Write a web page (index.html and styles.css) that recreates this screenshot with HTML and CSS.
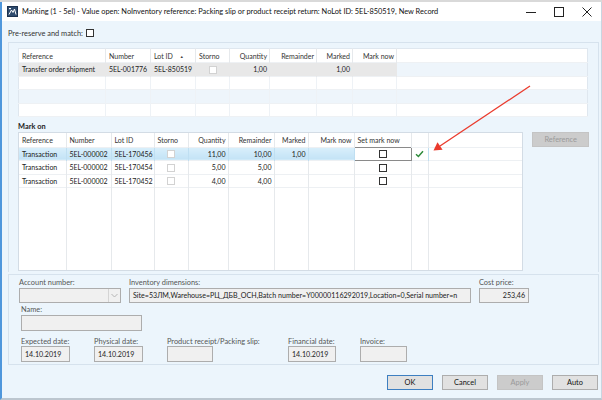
FILE: index.html
```html
<!DOCTYPE html>
<html>
<head>
<meta charset="utf-8">
<link rel="stylesheet" href="styles.css">
</head>
<body>
<div class="win">
  <div class="strip"></div>
  <div class="frame">
    <div class="titlebar">
      <svg class="appicon" width="11" height="11" viewBox="0 0 11 11">
        <rect x="0.5" y="0.5" width="10" height="10" fill="#2f4b6e" stroke="#1d3350"/>
        <path d="M2 8.5 L4.5 4 L6 6.5 L7.5 3 L9 8.5" fill="none" stroke="#ffffff" stroke-width="1"/>
        <rect x="2" y="2" width="2" height="1.2" fill="#ffffff"/>
      </svg>
      <span class="title">Marking (1 - 5el) - Value open: NoInventory reference: Packing slip or product receipt return: NoLot ID: 5EL-850519, New Record</span>
      <div class="controls">
        <span class="ctl"><svg width="10" height="10" viewBox="0 0 10 10"><path d="M0 5.5 H10" stroke="#222" stroke-width="1"/></svg></span>
        <span class="ctl"><svg width="10" height="10" viewBox="0 0 10 10"><rect x="0.5" y="0.5" width="9" height="9" fill="none" stroke="#222" stroke-width="1"/></svg></span>
        <span class="ctl"><svg width="10" height="10" viewBox="0 0 10 10"><path d="M0.5 0.5 L9.5 9.5 M9.5 0.5 L0.5 9.5" stroke="#222" stroke-width="1"/></svg></span>
      </div>
    </div>

    <div class="body">
      <div class="prerow">Pre-reserve and match: <span class="cb"></span></div>

      <div class="panel main">
        <table class="grid g1">
          <colgroup>
            <col style="width:87px"><col style="width:45px"><col style="width:45px"><col style="width:34px"><col style="width:40px"><col style="width:47px"><col style="width:36px"><col style="width:44px"><col>
          </colgroup>
          <tr class="hdr">
            <th>Reference</th><th>Number</th><th>Lot ID <span class="sort">&#9650;</span></th><th>Storno</th><th class="r">Quantity</th><th class="r">Remainder</th><th class="r">Marked</th><th class="r">Mark now</th><th class="fill"></th>
          </tr>
          <tr class="sel1">
            <td>Transfer order shipment</td><td>5EL-001776</td><td>5EL-850519</td><td class="c"><span class="cbd"></span></td><td class="r">1,00</td><td class="r"></td><td class="r">1,00</td><td></td><td class="fill"></td>
          </tr>
          <tr class="e"><td></td><td></td><td></td><td></td><td></td><td></td><td></td><td></td><td class="fill"></td></tr>
          <tr class="e alt"><td></td><td></td><td></td><td></td><td></td><td></td><td></td><td></td><td class="fill"></td></tr>
          <tr class="e"><td></td><td></td><td></td><td></td><td></td><td></td><td></td><td></td><td class="fill"></td></tr>
        </table>

        <div class="markon">Mark on</div>

        <div class="lowrow">
          <div class="g2wrap">
            <table class="grid g2">
              <colgroup>
                <col style="width:47px"><col style="width:45px"><col style="width:43px"><col style="width:34px"><col style="width:40px"><col style="width:46px"><col style="width:34px"><col style="width:46px"><col style="width:57px"><col style="width:17px"><col>
              </colgroup>
              <tr class="hdr">
                <th>Reference</th><th>Number</th><th>Lot ID</th><th>Storno</th><th class="r">Quantity</th><th class="r">Remainder</th><th class="r">Marked</th><th class="r">Mark now</th><th>Set mark now</th><th></th><th class="fill"></th>
              </tr>
              <tr class="sel2">
                <td>Transaction</td><td>5EL-000002</td><td>5EL-170456</td><td class="c"><span class="cbd"></span></td><td class="r">11,00</td><td class="r">10,00</td><td class="r">1,00</td><td></td><td class="c edit"><span class="cb"></span></td><td class="c ok"><svg width="9" height="8" viewBox="0 0 9 8"><path d="M1 4.2 L3.4 6.5 L8 1.2" fill="none" stroke="#2e8b3a" stroke-width="1.5"/></svg></td><td class="fill"></td>
              </tr>
              <tr>
                <td>Transaction</td><td>5EL-000002</td><td>5EL-170454</td><td class="c"><span class="cbd"></span></td><td class="r">5,00</td><td class="r">5,00</td><td class="r"></td><td></td><td class="c"><span class="cb"></span></td><td></td><td class="fill"></td>
              </tr>
              <tr>
                <td>Transaction</td><td>5EL-000002</td><td>5EL-170452</td><td class="c"><span class="cbd"></span></td><td class="r">4,00</td><td class="r">4,00</td><td class="r"></td><td></td><td class="c"><span class="cb"></span></td><td></td><td class="fill"></td>
              </tr>
              <tr class="last"><td></td><td></td><td></td><td></td><td></td><td></td><td></td><td></td><td></td><td></td><td class="fill"></td></tr>
            </table>
          </div>
          <div class="btn disabled refbtn">Reference</div>
        </div>
      </div>

      <div class="panel bottom">
        <div class="frow r1">
          <div class="fg acct">
            <div class="lbl">Account number:</div>
            <div class="fld combo"><span class="dd"><svg width="7" height="5" viewBox="0 0 7 5"><path d="M0.5 1 L3.5 4 L6.5 1" fill="none" stroke="#b5b5b5" stroke-width="1"/></svg></span></div>
          </div>
          <div class="fg inv">
            <div class="lbl">Inventory dimensions:</div>
            <div class="fld">Site=53ЛМ,Warehouse=РЦ_ДБВ_ОСН,Batch number=Y00000116292019,Location=0,Serial number=n</div>
          </div>
          <div class="fg cost">
            <div class="lbl">Cost price:</div>
            <div class="fld r">253,46</div>
          </div>
        </div>
        <div class="frow r2">
          <div class="fg name">
            <div class="lbl">Name:</div>
            <div class="fld tall"></div>
          </div>
        </div>
        <div class="frow r3">
          <div class="fg d1"><div class="lbl">Expected date:</div><div class="fld date">14.10.2019</div></div>
          <div class="fg d2"><div class="lbl">Physical date:</div><div class="fld date">14.10.2019</div></div>
          <div class="fg d3"><div class="lbl">Product receipt/Packing slip:</div><div class="fld date"></div></div>
          <div class="fg d4"><div class="lbl">Financial date:</div><div class="fld date">14.10.2019</div></div>
          <div class="fg d5"><div class="lbl">Invoice:</div><div class="fld date"></div></div>
        </div>
      </div>

      <div class="btnrow">
        <div class="btn def">OK</div>
        <div class="btn">Cancel</div>
        <div class="btn disabled">Apply</div>
        <div class="btn">Auto</div>
      </div>
    </div>
  </div>

  <svg class="arrow" width="602" height="400" viewBox="0 0 602 400">
    <path d="M530 86 L440 146" stroke="#ea3a2c" stroke-width="1.3" fill="none"/>
    <path d="M433.5 150.5 L437.5 142.2 L442.6 149.8 Z" fill="#ea3a2c"/>
  </svg>
</div>
</body>
</html>
```

FILE: styles.css
```css
* { box-sizing: border-box; }
html, body { margin: 0; padding: 0; background: #ffffff; }
.win {
  position: relative;
  width: 602px;
  height: 400px;
  overflow: hidden;
  font-family: Lato, "Open Sans", sans-serif;
  font-size: 7.4px;
  color: #1e1e1e;
  background: #ecf5fc;
  display: flex;
  flex-direction: column;
}
.strip { height: 2px; background: #d9d9d9; flex: none; }
.frame {
  flex: 1;
  display: flex;
  flex-direction: column;
  border-left: 2px solid #4f97dc;
  border-right: 1px solid #c9d5e0;
  border-bottom: 2px solid #bcc6cf;
}
.titlebar {
  height: 19px;
  flex: none;
  background: #ffffff;
  display: flex;
  align-items: center;
  padding-left: 5px;
}
.appicon { flex: none; margin-right: 4px; }
.title { font-size: 7.4px; color: #111; white-space: nowrap; }
.controls { margin-left: auto; display: flex; height: 19px; }
.ctl { width: 28px; display: flex; align-items: center; justify-content: center; }
.body { flex: 1; display: flex; flex-direction: column; }
.prerow {
  height: 12px;
  margin-top: 6px;
  padding-left: 6px;
  display: flex;
  align-items: center;
  gap: 3px;
  color: #333;
}
.cb {
  display: inline-block;
  width: 8px;
  height: 8px;
  border: 1px solid #333;
  background: #fff;
}
.cbd {
  display: inline-block;
  width: 8px;
  height: 8px;
  border: 1px solid #d2d2d2;
  background: #fff;
}
.panel { border: 1px solid #d6e2ed; }
.main {
  margin: 3px 2px 0 6px;
  padding: 5px 9px 1px 9px;
  border-bottom: none;
}
.grid {
  border-collapse: collapse;
  table-layout: fixed;
  background: #fff;
  font-size: 7px;
}
.grid th, .grid td {
  height: 13.5px;
  padding: 0 1px 0 3px;
  white-space: nowrap;
  overflow: hidden;
  text-align: left;
  font-weight: normal;
  border-right: 1px solid #e6e9ec;
  color: #222;
}
.grid th { height: 14px; color: #333; }
.grid .r { text-align: right; padding-right: 2px; }
.grid .c { text-align: center; padding: 0; }
.grid .c .cb, .grid .c .cbd { vertical-align: middle; }
.grid .fill { border-right: none; }
.sort { font-size: 4px; vertical-align: middle; margin-left: 5px; color: #444; }
.g1 { width: 570px; border: 1px solid #dfe7ef; }
.g1 .sel1 td { background: #e8e8e8; border-right-color: #e8e8e8; }
.g1 .sel1 td.fill { background: #eef5fb; }
.g1 .e td { background: #fff; border-right-color: #eef2f6; }
.g1 .e.alt td { background: #eef5fb; }
.g1 tr { border-bottom: 1px solid #eef1f4; }
.markon {
  font-weight: bold;
  height: 12px;
  margin-top: 2px;
  display: flex;
  align-items: flex-end;
  color: #222;
}
.lowrow { display: flex; align-items: flex-start; margin-top: 1px; }
.g2wrap {
  width: 509px;
  height: 139px;
  border: 1px solid #d3dce5;
  background: #fff;
  overflow: hidden;
}
.g2 { width: 507px; }
.g2 tr { border-bottom: 1px solid #edf0f3; }
.g2 tr.last td { height: 90px; }
.g2 .sel2 td {
  background: linear-gradient(#d9effb, #c3e3f6);
  border-right-color: #bfdff2;
}
.g2 .sel2 td.fill { background: #fff; }
.g2 .sel2 td.edit { background: #fff; border: 1px solid #8a8a8a; }
.g2 .sel2 td.ok { background: #fff; }
.g2 .ok svg { display: block; margin: 0 auto; }
.btn {
  height: 15px;
  width: 46px;
  border: 1px solid #adadad;
  background: #e1e1e1;
  display: flex;
  align-items: center;
  justify-content: center;
  color: #111;
}
.btn.def { border-color: #3d7fc1; }
.btn.disabled { background: #cccccc; border-color: #c4c4c4; color: #9a9a9a; }
.refbtn { width: 57px; margin-left: 9px; height: 15px; }
.bottom {
  margin: 2px 2px 0 6px;
  height: 91px;
  padding-top: 3px;
}
.frow { display: flex; align-items: flex-start; }
.fg { display: flex; flex-direction: column; }
.lbl { height: 9px; line-height: 9px; color: #555; white-space: nowrap; margin-bottom: 1px; }
.fld {
  height: 15px;
  border: 1px solid #adadad;
  background: #f0f0f0;
  padding: 0 3px;
  display: flex;
  align-items: center;
  white-space: nowrap;
  overflow: hidden;
  color: #222;
  font-size: 7.1px;
}
.fld.r { justify-content: flex-end; }
.fld.tall { height: 16px; }
.combo { position: relative; justify-content: flex-end; padding: 0; }
.dd {
  width: 12px;
  height: 13px;
  border-left: 1px solid #d4d4d4;
  display: flex;
  align-items: center;
  justify-content: center;
}
.acct { margin-left: 10px; width: 102px; }
.inv { margin-left: 8px; width: 342px; }
.cost { margin-left: 8px; width: 50px; }
.r2 { margin-top: 2px; }
.name { margin-left: 12px; width: 121px; }
.r3 { margin-top: 6px; }
.r3 .lbl { margin-bottom: 0; }
.d1 { margin-left: 12px; width: 49px; }
.d2 { margin-left: 24px; width: 49px; }
.d3 { margin-left: 24px; width: 46px; }
.d4 { margin-left: 75px; width: 48px; }
.d5 { margin-left: 24px; width: 47px; }
.date { height: 16px; }
.btnrow {
  display: flex;
  justify-content: flex-end;
  gap: 9px;
  margin-top: 10px;
  padding-right: 3px;
}
.arrow { position: absolute; left: 0; top: 0; pointer-events: none; }
```
